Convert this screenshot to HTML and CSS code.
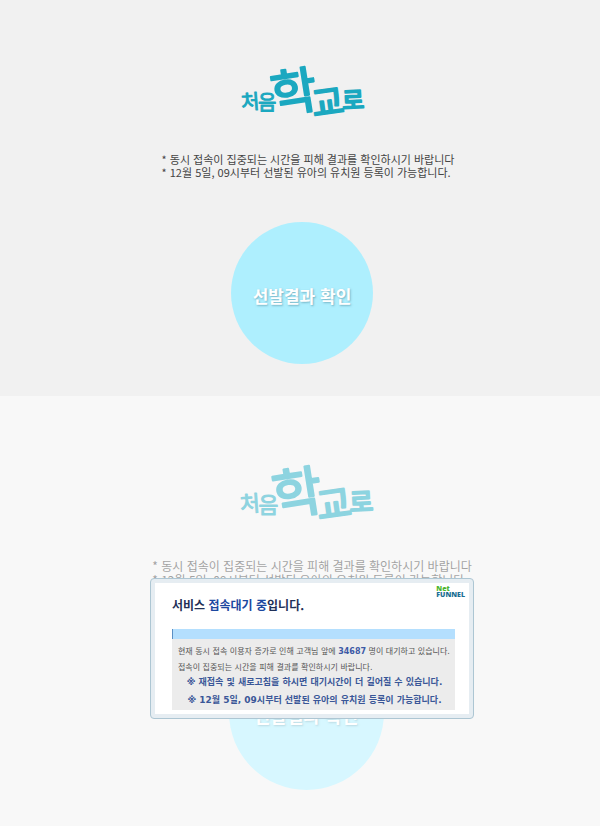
FILE: index.html
```html
<!DOCTYPE html>
<html lang="ko">
<head>
  <meta charset="UTF-8">
  <meta name="viewport" content="width=device-width, initial-scale=1.0">
  <title>처음학교로</title>
  <link rel="stylesheet" href="styles.css">
</head>
<body>

  <!-- Result check -->
  <section class="screen">
    <svg class="logo" viewBox="0 0 122 52" role="img" aria-label="처음학교로">
      <text class="logo-small" x="0" y="42" transform="rotate(-4 9 35)">처</text>
      <text class="logo-small" x="17" y="43">음</text>
      <text class="logo-big" x="30" y="43" transform="rotate(-9 54 26)">학</text>
      <text class="logo-mid" x="71" y="48" transform="rotate(-8 87 38)">교</text>
      <text class="logo-end" x="101" y="42" transform="rotate(-3 112 35)">로</text>
    </svg>
    <div class="notice">
      <p>* 동시 접속이 집중되는 시간을 피해 결과를 확인하시기 바랍니다</p>
      <p>* 12월 5일, 09시부터 선발된 유아의 유치원 등록이 가능합니다.</p>
    </div>
    <button type="button" class="btn-result">선발결과 확인</button>
  </section>

  <!-- Waiting for access -->
  <section class="screen screen-wait">
    <svg class="logo" viewBox="0 0 122 52" role="img" aria-label="처음학교로">
      <text class="logo-small" x="0" y="42" transform="rotate(-4 9 35)">처</text>
      <text class="logo-small" x="17" y="43">음</text>
      <text class="logo-big" x="30" y="43" transform="rotate(-9 54 26)">학</text>
      <text class="logo-mid" x="71" y="48" transform="rotate(-8 87 38)">교</text>
      <text class="logo-end" x="101" y="42" transform="rotate(-3 112 35)">로</text>
    </svg>
    <div class="notice">
      <p>* 동시 접속이 집중되는 시간을 피해 결과를 확인하시기 바랍니다</p>
      <p>* 12월 5일, 09시부터 선발된 유아의 유치원 등록이 가능합니다.</p>
    </div>
    <button type="button" class="btn-result">선발결과 확인</button>

    <div class="overlay"></div>

    <div class="popup" role="dialog" aria-labelledby="popup-title">
      <div class="popup-content">
        <div class="brand"><span class="brand-net">Net</span><span>FUNNEL</span></div>
        <h2 id="popup-title">서비스 <span>접속대기 중</span>입니다.</h2>
        <div class="progress"></div>
        <div class="message">
          <p>현재 동시 접속 이용자 증가로 인해 고객님 앞에 <b>34687</b> 명이 대기하고 있습니다.</p>
          <p>접속이 집중되는 시간을 피해 결과를 확인하시기 바랍니다.</p>
          <p class="warning">※ 재접속 및 새로고침을 하시면 대기시간이 더 길어질 수 있습니다.</p>
          <p class="warning">※ 12월 5일, 09시부터 선발된 유아의 유치원 등록이 가능합니다.</p>
        </div>
      </div>
    </div>
  </section>

</body>
</html>
```
FILE: styles.css
```css
* { box-sizing: border-box; }
body {
  margin: 0;
  min-height: 100vh;
  display: flex;
  flex-direction: column;
  font-family: "Noto Sans CJK KR", sans-serif;
  background: #f1f1f1;
  color: #444;
}
p, h2 { margin: 0; }

.screen {
  position: relative;
  display: flex;
  flex-direction: column;
  align-items: center;
  padding: 67px 0 32px 4px;
  background: #f1f1f1;
}
.screen-wait {
  flex: 1;
  padding: 70px 0 36px 12px;
  overflow: hidden;
}

.logo {
  display: block;
  width: 122px;
  fill: #1ba8c0;
  stroke: #1ba8c0;
  stroke-linejoin: round;
  overflow: visible;
}
.logo text { font-weight: 400; }
.logo-small { font-size: 20px; stroke-width: 1px; }
.logo-big { font-size: 50px; stroke-width: 2px; }
.logo-mid { font-size: 35px; stroke-width: 2px; }
.logo-end { font-size: 24px; stroke-width: 2px; }
.screen-wait .logo { width: 132px; }

.notice {
  margin-top: 34px;
  padding-left: 12px;
  font-size: 11px;
  line-height: 13px;
}
.screen-wait .notice {
  margin-top: 37px;
  font-size: 12px;
  line-height: 14px;
}

.btn-result {
  width: 142px;
  height: 142px;
  margin-top: 43px;
  padding: 4px 0 0;
  border: none;
  border-radius: 50%;
  background: #aeeffe;
  color: #fff;
  font-family: inherit;
  font-size: 17px;
  font-weight: bold;
  text-shadow: 1px 1px 2px rgba(60, 120, 140, 0.5);
  white-space: nowrap;
  cursor: pointer;
}
.screen-wait .btn-result {
  width: 155px;
  height: 155px;
  margin-top: 48px;
  font-size: 18px;
}

.overlay {
  position: absolute;
  inset: 0;
  background: rgba(255, 255, 255, 0.5);
}

.popup {
  position: absolute;
  top: 182px;
  left: 25%;
  width: 324px;
  padding: 4px;
  border: 1px solid #adc6d3;
  border-radius: 4px;
  background: #e6edf2;
  font-family: "DejaVu Sans", "Noto Sans CJK KR", sans-serif;
}
.popup-content {
  position: relative;
  padding: 13px 14px 4px 17px;
  background: #fff;
}
.popup h2 {
  font-family: "Noto Sans CJK KR", sans-serif;
  font-size: 12px;
  line-height: 18px;
  color: #1f3057;
}
.popup h2 span { color: #1c48a0; }

.brand {
  position: absolute;
  top: 3px;
  right: 4px;
  font-family: "Open Sans", sans-serif;
  font-size: 7px;
  font-weight: 800;
  line-height: 6px;
  color: #1b6f93;
}
.brand span { display: block; }
.brand .brand-net { color: #4cb52c; }

.progress {
  height: 10px;
  margin-top: 15px;
  border-left: 1px solid #5b8fc4;
  background: #b4dffe;
}
.message {
  padding: 5px 0 4px 6px;
  background: #ececec;
  color: #555;
  font-size: 8px;
  line-height: 16px;
  white-space: nowrap;
}
.message b { color: #3d5aa6; }
.message .warning {
  padding-right: 4px;
  font-size: 9px;
  font-weight: bold;
  line-height: 12px;
  text-align: center;
  color: #3a5798;
}
.warning + .warning { margin-top: 6px; }
```
